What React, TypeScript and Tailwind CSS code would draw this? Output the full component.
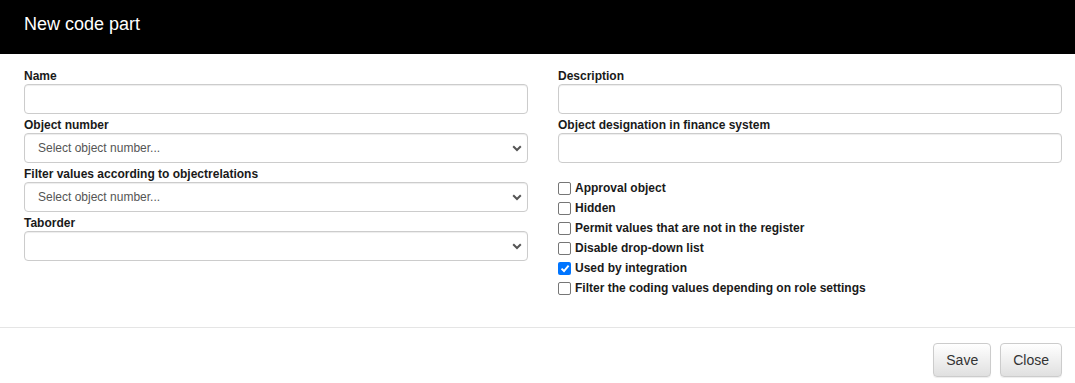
import React from "react";

const font = { fontFamily: '"Liberation Sans", Arial, sans-serif' };

function Label({ children }: { children: React.ReactNode }) {
  return <div className="text-[12px] leading-[15px] font-bold text-[#1a1a1a]">{children}</div>;
}

function TextInput() {
  return (
    <div className="h-[30px] w-full rounded-[4px] border border-[#cccccc] bg-white shadow-[inset_0_1px_1px_rgba(0,0,0,0.075)]" />
  );
}

function Chevron() {
  return (
    <svg width="10" height="7" viewBox="0 0 10 7" className="text-[#555]">
      <path d="M1.2 1.3 L5 5 L8.8 1.3" fill="none" stroke="currentColor" strokeWidth="2" />
    </svg>
  );
}

function SelectBox({ placeholder }: { placeholder?: string }) {
  return (
    <div className="flex h-[30px] w-full items-center justify-between rounded-[4px] border border-[#cccccc] bg-white pl-[13px] pr-[5px] shadow-[inset_0_1px_1px_rgba(0,0,0,0.075)]">
      <span className="text-[12px] text-[#555]">{placeholder}</span>
      <Chevron />
    </div>
  );
}

function Field({ label, children }: { label: string; children: React.ReactNode }) {
  return (
    <div className="mb-[4px]">
      <Label>{label}</Label>
      {children}
    </div>
  );
}

function Check({ label, checked }: { label: string; checked?: boolean }) {
  return (
    <label className="flex h-[20px] items-center gap-[4px]">
      {checked ? (
        <span className="flex h-[13px] w-[13px] items-center justify-center rounded-[2px] bg-[#0075ff]">
          <svg width="10" height="9" viewBox="0 0 10 9">
            <path d="M1.5 4.6 L4 7 L8.6 1.6" fill="none" stroke="white" strokeWidth="1.9" />
          </svg>
        </span>
      ) : (
        <span className="h-[13px] w-[13px] rounded-[2px] border border-[#767676] bg-white" />
      )}
      <span className="text-[12px] font-bold text-[#1a1a1a]">{label}</span>
    </label>
  );
}

function Button({ children }: { children: React.ReactNode }) {
  return (
    <button className="h-[34px] rounded-[4px] border border-[#cccccc] bg-gradient-to-b from-white to-[#e0e0e0] px-[12px] text-[14px] text-[#333] shadow-[inset_0_1px_0_rgba(255,255,255,0.15),0_1px_1px_rgba(0,0,0,0.075)]">
      {children}
    </button>
  );
}

export default function App() {
  return (
    <div className="h-[383px] w-[1075px] overflow-hidden bg-white" style={font}>
      <div className="h-[54px] bg-black pl-[24px] pt-[14px] text-[18px] leading-[21px] text-white">
        New code part
      </div>

      <div className="grid h-[273px] grid-cols-2 gap-x-[30px] pl-[24px] pr-[13px] pt-[15px]">
        <div>
          <Field label="Name">
            <TextInput />
          </Field>
          <Field label="Object number">
            <SelectBox placeholder="Select object number..." />
          </Field>
          <Field label="Filter values according to objectrelations">
            <SelectBox placeholder="Select object number..." />
          </Field>
          <Field label="Taborder">
            <SelectBox />
          </Field>
        </div>
        <div>
          <Field label="Description">
            <TextInput />
          </Field>
          <Field label="Object designation in finance system">
            <TextInput />
          </Field>
          <div className="mt-[15px]">
            <Check label="Approval object" />
            <Check label="Hidden" />
            <Check label="Permit values that are not in the register" />
            <Check label="Disable drop-down list" />
            <Check label="Used by integration" checked />
            <Check label="Filter the coding values depending on role settings" />
          </div>
        </div>
      </div>

      <div className="flex justify-end gap-[9px] border-t border-[#e5e5e5] pl-[24px] pr-[13px] pt-[15px]">
        <Button>Save</Button>
        <Button>Close</Button>
      </div>
    </div>
  );
}
